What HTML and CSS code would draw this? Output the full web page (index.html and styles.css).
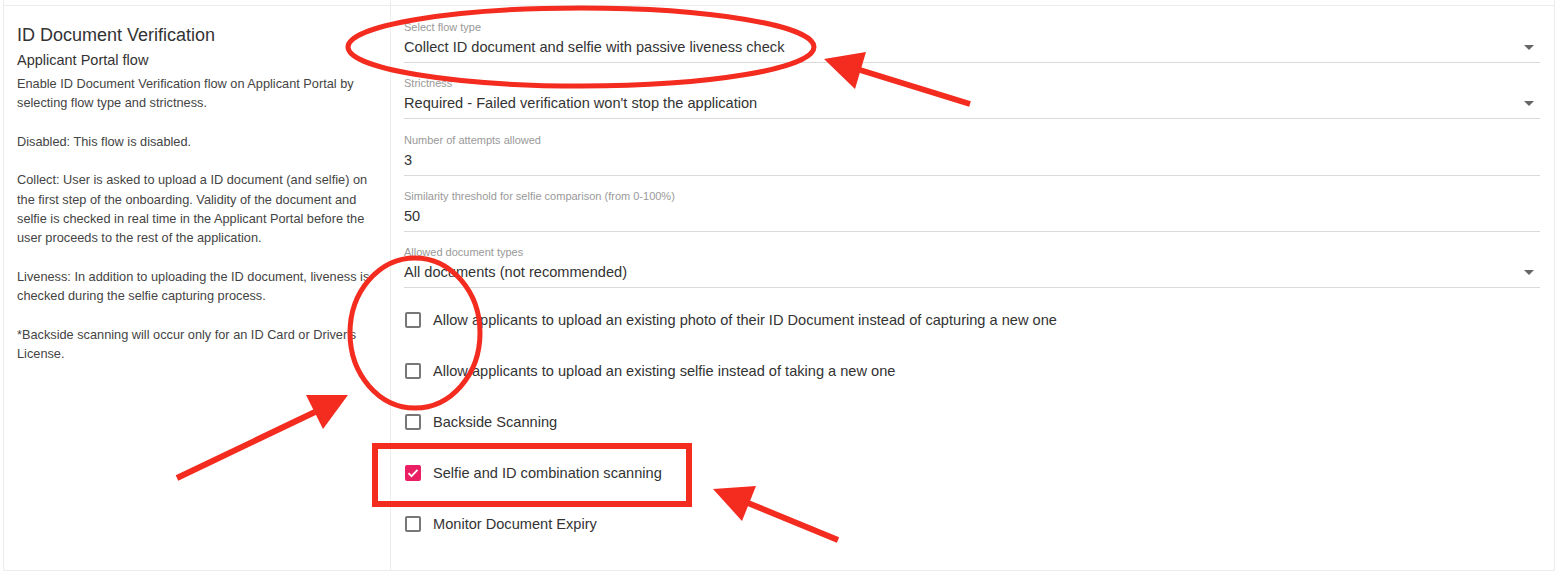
FILE: index.html
```html
<!DOCTYPE html>
<html lang="en">
<head>
  <meta charset="UTF-8" />
  <meta name="viewport" content="width=device-width, initial-scale=1.0" />
  <title>ID Document Verification</title>
  <link rel="stylesheet" href="styles.css">
</head>
<body>
  <div class="table">
    <div class="row row-prev">
      <div class="cell-left"></div>
      <div class="cell-right"></div>
    </div>

    <div class="row">
      <div class="cell-left">
        <h2>ID Document Verification</h2>
        <h3>Applicant Portal flow</h3>
        <p>Enable ID Document Verification flow on Applicant Portal by selecting flow type and strictness.</p>
        <p>Disabled: This flow is disabled.</p>
        <p>Collect: User is asked to upload a ID document (and selfie) on the first step of the onboarding. Validity of the document and selfie is checked in real time in the Applicant Portal before the user proceeds to the rest of the application.</p>
        <p>Liveness: In addition to uploading the ID document, liveness is checked during the selfie capturing process.</p>
        <p>*Backside scanning will occur only for an ID Card or Driver's License.</p>
      </div>

      <div class="cell-right">
        <div class="field">
          <label>Select flow type</label>
          <div class="value">Collect ID document and selfie with passive liveness check <span class="caret"></span></div>
        </div>
        <div class="field">
          <label>Strictness</label>
          <div class="value">Required - Failed verification won't stop the application <span class="caret"></span></div>
        </div>
        <div class="field">
          <label>Number of attempts allowed</label>
          <div class="value">3</div>
        </div>
        <div class="field">
          <label>Similarity threshold for selfie comparison (from 0-100%)</label>
          <div class="value">50</div>
        </div>
        <div class="field">
          <label>Allowed document types</label>
          <div class="value">All documents (not recommended) <span class="caret"></span></div>
        </div>

        <div class="checks">
          <div class="check"><span class="box"></span>Allow applicants to upload an existing photo of their ID Document instead of capturing a new one</div>
          <div class="check"><span class="box"></span>Allow applicants to upload an existing selfie instead of taking a new one</div>
          <div class="check"><span class="box"></span>Backside Scanning</div>
          <div class="check"><span class="box checked">
            <svg viewBox="0 0 16 16" width="16" height="16"><path d="M3.5 8.2l3 3 6-6.4" fill="none" stroke="#fff" stroke-width="1.8"/></svg>
          </span>Selfie and ID combination scanning</div>
          <div class="check"><span class="box"></span>Monitor Document Expiry</div>
        </div>
      </div>
    </div>
  </div>

  <!-- red annotations drawn over the screenshot -->
  <svg class="marks" width="1562" height="576" viewBox="0 0 1562 576">
    <g fill="none" stroke="#f42b1f" stroke-width="5">
      <ellipse cx="581" cy="47" rx="233" ry="39" />
      <ellipse cx="415" cy="333" rx="65" ry="75" />
      <rect x="375" y="446" width="314" height="58" stroke-width="6" />
    </g>
    <g stroke="#f42b1f" stroke-width="6" fill="#f42b1f">
      <line x1="970" y1="104" x2="860" y2="70" />
      <polygon points="824,59 866,52 855,89" stroke="none" />
      <line x1="177" y1="478" x2="315" y2="412" />
      <polygon points="348,395 306,395 323,429" stroke="none" />
      <line x1="838" y1="540" x2="748" y2="503" />
      <polygon points="713,489 756,486 742,521" stroke="none" />
    </g>
  </svg>
</body>
</html>
```

FILE: styles.css
```css
body { margin: 0; font-family: "Liberation Sans", Arial, sans-serif; color: #333; background: #fff; position: relative; }
.table { margin-left: 3px; width: 1550px; border-left: 1px solid #ececec; border-right: 1px solid #ececec; }
.row { display: grid; grid-template-columns: 387px 1fr; border-bottom: 1px solid #ececec; }
.row-prev { height: 5px; }
.cell-left { border-right: 1px solid #ececec; padding: 18px 14px 0 13px; }
.cell-right { padding: 15px 14px 20px 13px; }

h2 { font-size: 18px; font-weight: normal; margin: 0 0 4px; color: #333; line-height: 22px; }
h3 { font-size: 14.5px; font-weight: normal; margin: 0 0 4px; color: #333; line-height: 20px; }
.cell-left p { font-size: 12.75px; line-height: 19.3px; margin: 0 0 19.3px; color: #444; }

.field { margin-bottom: 14.3px; border-bottom: 1px solid #dadada; padding-bottom: 5px; }
.field label { display: block; font-size: 11px; line-height: 12px; color: #999; margin-bottom: 4px; }
.value { display: flex; justify-content: space-between; align-items: center; font-size: 14.6px; line-height: 20px; color: #333; }
.caret { width: 0; height: 0; border-left: 5px solid transparent; border-right: 5px solid transparent; border-top: 5px solid #666; margin-right: 6px; }

.checks { margin-top: -7.8px; }
.check { display: flex; align-items: center; height: 51px; font-size: 14.6px; color: #333; }
.box { width: 12px; height: 12px; border: 2px solid #777; border-radius: 2px; margin: 0 12px 0 1px; flex: none; }
.box.checked { background: #e91e63; border-color: #e91e63; position: relative; }
.box.checked svg { position: absolute; left: -2px; top: -2px; }

.marks { position: absolute; left: 0; top: 0; pointer-events: none; }
```
